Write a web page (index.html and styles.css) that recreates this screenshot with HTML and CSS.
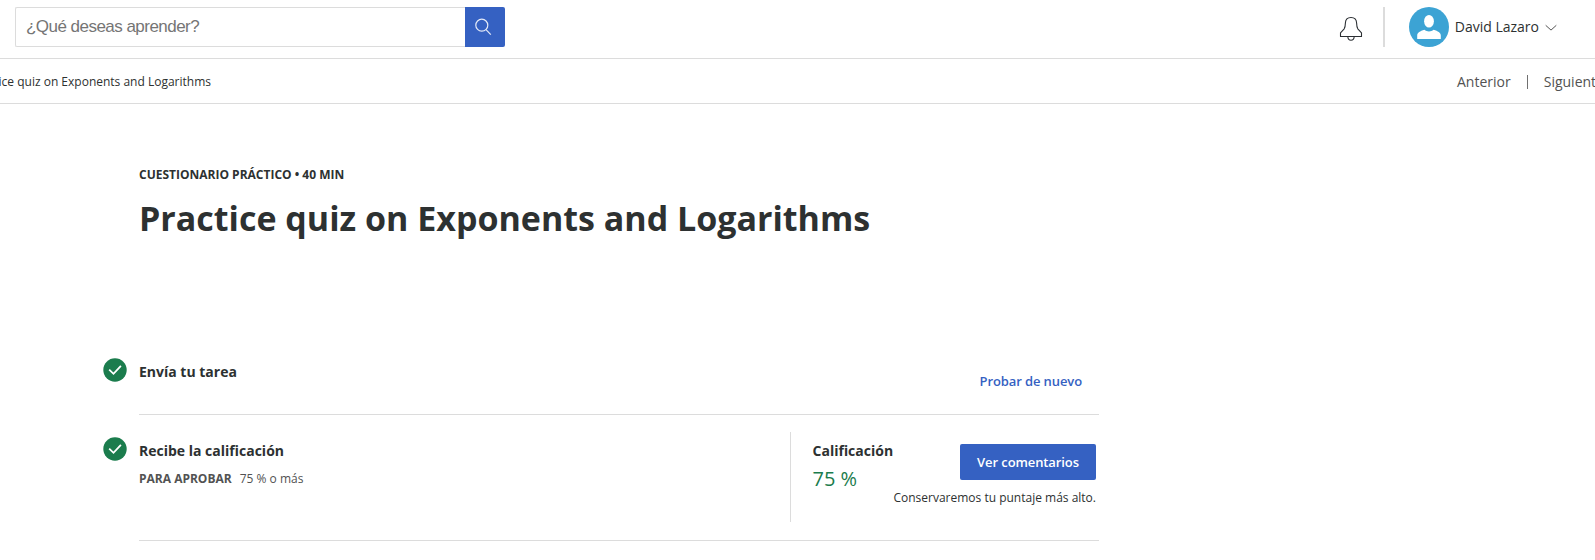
FILE: index.html
```html
<!DOCTYPE html>
<html lang="es">
<head>
<meta charset="utf-8">
<title>Practice quiz on Exponents and Logarithms</title>
<link rel="stylesheet" href="styles.css">
</head>
<body>
<header class="topbar">
  <form class="search">
    <div class="search-field">¿Qué deseas aprender?</div>
    <div class="search-button">
      <svg width="18" height="18" viewBox="0 0 18 18" fill="none" stroke="#e4eaf7" stroke-width="1.2"><circle cx="6.8" cy="7.2" r="6"/><path d="M11 11.6l4.8 5"/></svg>
    </div>
  </form>
  <div class="account">
    <svg class="bell" width="24" height="26" viewBox="0 0 24 26" fill="none" stroke="#2b2f33" stroke-width="1.1" stroke-linejoin="round"><path d="M1.5 20.5V16.8L5.2 12.8C6 11.6 6.3 10 6.4 7C6.5 3.4 8.2 1.5 12 1.5S17.5 3.4 17.6 7C17.7 10 18 11.6 18.8 12.8L22.5 16.8V20.5Z"/><path d="M8.8 20.8C9 23.2 10.2 24.3 12 24.3S15 23.2 15.2 20.8"/></svg>
    <span class="account-divider"></span>
    <svg class="avatar" width="40" height="40" viewBox="0 0 40 40"><circle cx="20" cy="20" r="20" fill="#3ca3d4"/><ellipse cx="20" cy="14.2" rx="4.9" ry="6.3" fill="#fff"/><path d="M8.2 32V28.4C8.4 25.6 11 24.2 15.4 22.8C18 25 22 25 24.6 22.8C29 24.2 31.6 25.6 31.8 28.4V32Z" fill="#fff"/></svg>
    <span class="user-name">David Lazaro</span>
    <svg class="chevron" width="12" height="8" viewBox="0 0 12 8" fill="none" stroke="#555" stroke-width="1"><path d="M.7 1.3L6 6.1L11.3 1.3"/></svg>
  </div>
</header>
<nav class="subbar">
  <div class="crumb"><span>Practice quiz on Exponents and Logarithms</span></div>
  <div class="pager">
    <span class="prev">Anterior</span>
    <span class="pager-divider"></span>
    <span class="next">Siguiente</span>
  </div>
</nav>
<main class="content">
  <div class="eyebrow"><span>CUESTIONARIO PRÁCTICO • 40 MIN</span></div>
  <h1 class="title"><span>Practice quiz on Exponents and Logarithms</span></h1>
  <section class="step step-submit">
    <svg class="check" width="24" height="24" viewBox="0 0 24 24"><circle cx="12" cy="12" r="11.7" fill="#1b7c4d"/><path d="M6.2 11.7l4.3 4.1l7.4-8" fill="none" stroke="#fff" stroke-width="1.8"/></svg>
    <div class="step-body">
      <h2 class="step-title">Envía tu tarea</h2>
      <a class="retry">Probar de nuevo</a>
    </div>
  </section>
  <section class="step step-grade">
    <svg class="check" width="24" height="24" viewBox="0 0 24 24"><circle cx="12" cy="12" r="11.7" fill="#1b7c4d"/><path d="M6.2 11.7l4.3 4.1l7.4-8" fill="none" stroke="#fff" stroke-width="1.8"/></svg>
    <div class="step-body">
      <div class="grade-info">
        <h2 class="step-title">Recibe la calificación</h2>
        <div class="pass"><b>PARA APROBAR</b><span>75 % o más</span></div>
      </div>
      <div class="grade">
        <div class="score">
          <div class="score-label">Calificación</div>
          <div class="score-value">75 %</div>
        </div>
        <div class="feedback">
          <div class="feedback-button">Ver comentarios</div>
          <div class="feedback-note">Conservaremos tu puntaje más alto.</div>
        </div>
      </div>
    </div>
  </section>
</main>
</body>
</html>
```
FILE: styles.css
```css
* { box-sizing: border-box; }
body { margin: 0; height: 560px; overflow: hidden; background: #fff; color: #2d3131; font-family: "Open Sans", sans-serif; white-space: nowrap; }
h1, h2 { margin: 0; }
svg { display: block; flex: none; }

.topbar { display: flex; justify-content: space-between; height: 59px; padding: 7px 38px 0 15px; border-bottom: 1px solid #dcdcdc; }
.search { display: flex; height: 40px; }
.search-field { width: 450px; padding-left: 10px; border: 1px solid #dcdcdc; border-right: 0; border-radius: 2px 0 0 2px; font: 300 17px/38px "Liberation Sans", Arial, sans-serif; letter-spacing: -0.53px; color: #757575; }
.search-button { display: flex; width: 40px; padding: 11px 0 0 10px; border-radius: 0 2px 2px 0; background: #3561c2; }
.account { display: flex; align-items: center; height: 40px; }
.bell { margin: 3px 20px 0 0; }
.account-divider { width: 2px; height: 40px; margin-right: 24px; background: #dcdcdc; }
.user-name { margin: 0 6px 0 6px; font-size: 14px; line-height: 20px; }
.chevron { margin-top: 2px; }

.subbar { display: flex; justify-content: space-between; height: 45px; border-bottom: 1px solid #dcdcdc; overflow: hidden; }
.crumb { display: flex; justify-content: flex-end; width: 211px; overflow: hidden; font-size: 12px; line-height: 45px; }
.pager { display: flex; align-items: center; width: 138px; padding-top: 1px; font-size: 14px; line-height: 44px; color: #525252; }
.pager-divider { flex: none; width: 1px; height: 14px; margin: 0 16px; background: #707070; }

.content { width: 1099px; padding: 62px 0 0 103px; }
.eyebrow { padding-left: 36px; font-size: 12px; font-weight: 700; line-height: 18px; }
.title { padding: 11px 0 0 36px; font-size: 34px; font-weight: 700; line-height: 46px; }
.step { display: flex; gap: 12px; }
.step-submit { height: 74px; margin-top: 100px; }
.step-grade { height: 126px; }
.step-body { display: flex; justify-content: space-between; flex: 1; border-bottom: 1px solid #dcdcdc; }
.step-submit .check { margin-top: 17px; }
.step-submit .step-title { padding-top: 21px; }
.step-grade .check { margin-top: 22px; }
.step-title { font-size: 14px; font-weight: 700; line-height: 20px; }
.retry { padding: 30px 17px 0 0; font-size: 13px; font-weight: 600; line-height: 20px; letter-spacing: -0.1px; color: #3561c2; }
.grade-info { padding-top: 26px; }
.pass { display: flex; gap: 8px; padding-top: 8px; font-size: 12px; line-height: 20px; color: #525252; }
.grade { display: flex; justify-content: space-between; width: 309px; height: 90px; margin-top: 17px; padding: 9px 3px 0 21.5px; border-left: 1px solid #dcdcdc; }
.score { width: 80px; }
.score-label { font-size: 14px; font-weight: 700; line-height: 20px; }
.score-value { padding-top: 3px; font-size: 20px; line-height: 30px; color: #1b7c4d; }
.feedback { display: flex; flex-direction: column; align-items: flex-end; padding-top: 3px; }
.feedback-button { width: 136px; height: 36px; border-radius: 2px; background: #3561c2; color: #fff; font-size: 13px; font-weight: 600; line-height: 36px; letter-spacing: -0.1px; text-align: center; }
.feedback-note { padding-top: 8px; font-size: 12px; line-height: 20px; }
```
